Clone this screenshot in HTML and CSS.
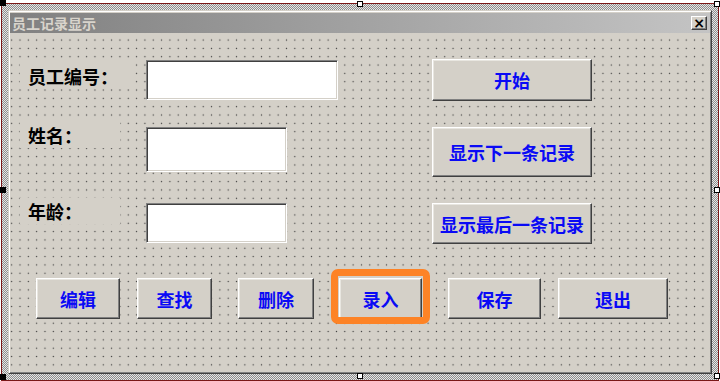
FILE: index.html
```html
<!DOCTYPE html>
<html lang="zh-CN">
<head>
    <meta charset="UTF-8">
    <title>员工记录显示</title>
    <link rel="stylesheet" href="styles.css">
</head>
<body>

<!-- design-time selection frame -->
<div class="frame">
    <div class="form">
        <div class="titlebar">
            <span class="title">员工记录显示</span>
            <span class="close-btn">×</span>
        </div>

        <div class="canvas">
            <div class="row row-1">
                <div class="label label-wide">员工编号：</div>
                <div><input class="textbox tb-wide" type="text"></div>
                <button class="btn side-btn">开始</button>
            </div>
            <div class="row row-2">
                <div class="label">姓名：</div>
                <div><input class="textbox tb-tall" type="text"></div>
                <button class="btn side-btn">显示下一条记录</button>
            </div>
            <div class="row row-3">
                <div class="label">年龄：</div>
                <div><input class="textbox" type="text"></div>
                <button class="btn side-btn">显示最后一条记录</button>
            </div>

            <div class="actions">
                <button class="btn act-edit">编辑</button>
                <button class="btn act-find">查找</button>
                <button class="btn act-del">删除</button>
                <button class="btn act-add highlight">录入</button>
                <button class="btn act-save">保存</button>
                <button class="btn act-exit">退出</button>
            </div>
        </div>
    </div>
</div>

<!-- sizing handles -->
<span class="handle dark h-tl"></span>
<span class="handle h-tm"></span>
<span class="handle h-tr"></span>
<span class="handle dark h-ml"></span>
<span class="handle h-mr"></span>
<span class="handle dark h-bl"></span>
<span class="handle h-bm"></span>
<span class="handle h-br"></span>

</body>
</html>
```

FILE: styles.css
```css
body {
    margin: 0;
    background-color: #fff;
    font-family: "Noto Sans CJK SC", "Liberation Sans", sans-serif;
}

/* Selection frame round the form */
.frame {
    margin: 3px 1px 1px 1px;
    border: 1px solid #7a1818;
    padding: 6px;
    background: repeating-conic-gradient(#8e8e8e 0 25%, #e6e6e6 0 50%) 0 0 / 2px 2px;
}

.form {
    height: 359px;
    background-color: #d4d0c8;
    border: 1px solid;
    border-color: #d4d0c8 #404040 #404040 #d4d0c8;
    box-shadow: inset 1px 1px #fff, inset -1px -1px #808080;
    padding: 2px 1px 1px 1px;
    display: flex;
    flex-direction: column;
}

/* Title bar */
.titlebar {
    height: 20px;
    background: linear-gradient(to right, #808080, #c4c4c4);
    display: flex;
    align-items: center;
    justify-content: space-between;
    padding: 0 3px 0 2px;
}

.title {
    color: #d8d4cc;
    font-size: 14px;
    font-weight: bold;
    line-height: 20px;
}

.close-btn {
    width: 14px;
    height: 12px;
    background-color: #d4d0c8;
    border: 1px solid;
    border-color: #fff #404040 #404040 #fff;
    box-shadow: inset -1px -1px #808080;
    font-family: "DejaVu Sans", sans-serif;
    font-size: 14px;
    font-weight: bold;
    line-height: 12px;
    text-align: center;
    color: #000;
}

/* Dotted design grid */
.canvas {
    flex: 1;
    padding-top: 26px;
    background-color: #d4d0c8;
    background-image: radial-gradient(circle, #3a3a3a 0.5px, rgba(0, 0, 0, 0) 1px);
    background-size: 8.333px 8.333px;
    background-position: -2.5px 2.9px;
}

.row {
    display: grid;
    grid-template-columns: 126px 286px 160px;
    align-items: start;
    padding-left: 10px;
}

.row-2,
.row-3 {
    margin-top: 26px;
}

.label {
    width: 92px;
    height: 26px;
    line-height: 26px;
    padding-left: 8px;
    background-color: #d4d0c8;
    color: #000;
    font-size: 18px;
    font-weight: bold;
    white-space: nowrap;
}

.label-wide {
    width: 104px;
}

.row-1 .label {
    margin-top: 4px;
}

.row-2 .label,
.row-3 .label {
    margin-top: -5px;
}

/* Sunken text boxes */
.textbox {
    display: block;
    box-sizing: border-box;
    width: 141px;
    height: 40px;
    margin: 0;
    padding: 0;
    background-color: #fff;
    border: 1px solid;
    border-color: #808080 #fff #fff #808080;
    box-shadow: inset 1px 1px #404040, inset -1px -1px #d4d0c8;
    outline: none;
}

.tb-wide {
    width: 192px;
    margin-top: 1px;
}

.tb-tall {
    height: 45px;
}

/* Raised command buttons */
.btn {
    box-sizing: border-box;
    height: 41px;
    margin: 0;
    padding: 0;
    background-color: #d4d0c8;
    border: 1px solid;
    border-color: #fff #404040 #404040 #fff;
    box-shadow: inset -1px -1px #808080, inset 1px 1px #e8e6e0;
    color: #0a0af5;
    font-family: "Noto Sans CJK SC", sans-serif;
    font-size: 18px;
    font-weight: bold;
    white-space: nowrap;
}

.side-btn {
    width: 160px;
}

.row-1 .side-btn {
    height: 42px;
}

.row-2 .side-btn {
    height: 50px;
}

/* Bottom button row */
.actions {
    display: flex;
    align-items: flex-start;
    margin-top: 34px;
}

.act-edit { width: 84px; margin-left: 26px; }
.act-find { width: 75px; margin-left: 17px; }
.act-del  { width: 76px; margin-left: 26px; }
.act-add  { width: 83px; margin-left: 25px; }
.act-save { width: 93px; margin-left: 26px; }
.act-exit { width: 110px; margin-left: 17px; }

/* Orange callout round 录入 */
.highlight {
    position: relative;
}

.highlight::after {
    content: "";
    position: absolute;
    top: -10px;
    left: -9px;
    right: -9px;
    bottom: -6px;
    border: 7px solid #fd8326;
    border-radius: 7px;
}

/* Sizing handles */
.handle {
    position: absolute;
    width: 4px;
    height: 4px;
    background-color: #fff;
    border: 1px solid #000;
}

.handle.dark {
    background-color: #000;
}

.h-tl { left: 0; top: 0; }
.h-tm { left: 357px; top: 1px; }
.h-tr { left: 714px; top: 1px; }
.h-ml { left: 0; top: 187px; }
.h-mr { left: 714px; top: 187px; }
.h-bl { left: 0; top: 374px; }
.h-bm { left: 357px; top: 373px; }
.h-br { left: 714px; top: 373px; }
```
